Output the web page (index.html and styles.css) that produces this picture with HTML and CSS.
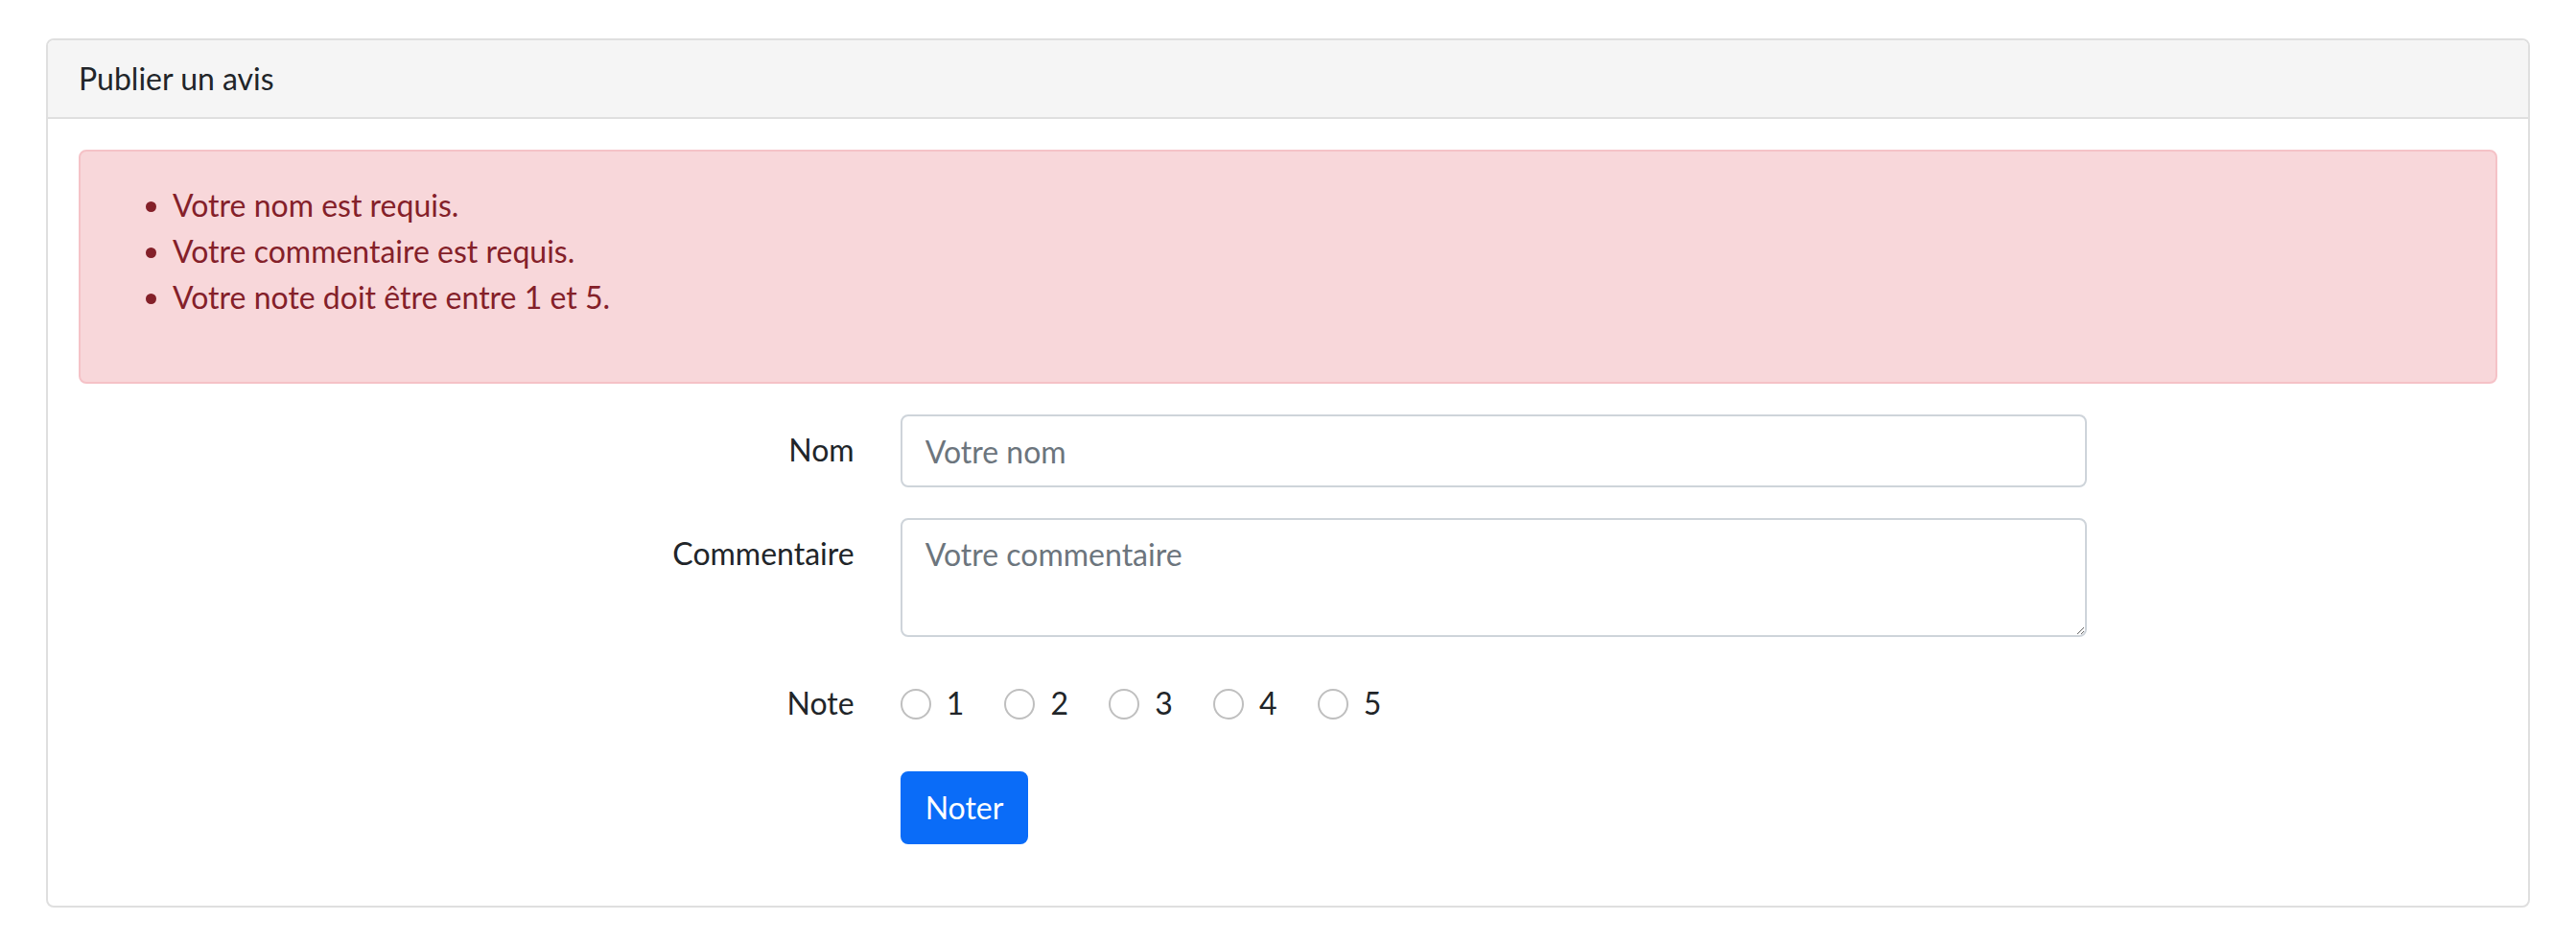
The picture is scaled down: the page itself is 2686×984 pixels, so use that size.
FILE: index.html
```html
<!DOCTYPE html>
<html lang="fr">
<head>
<meta charset="utf-8">
<title>Publier un avis</title>
<link rel="stylesheet" href="styles.css">
</head>
<body>
<div class="page">
  <div class="card">
    <div class="card-header">Publier un avis</div>
    <div class="card-body">
      <div class="alert">
        <ul>
          <li>Votre nom est requis.</li>
          <li>Votre commentaire est requis.</li>
          <li>Votre note doit être entre 1 et 5.</li>
        </ul>
      </div>
      <form class="form">
        <div class="row">
          <label class="col-label" for="nom">Nom</label>
          <div class="col-field"><input id="nom" class="control" type="text" placeholder="Votre nom"></div>
        </div>
        <div class="row">
          <label class="col-label" for="commentaire">Commentaire</label>
          <div class="col-field"><textarea id="commentaire" class="control textarea" rows="2" placeholder="Votre commentaire"></textarea></div>
        </div>
        <div class="row">
          <label class="col-label">Note</label>
          <div class="col-field radios">
            <div class="check"><input class="radio" type="radio" name="note" id="n1"><label for="n1">1</label></div>
            <div class="check"><input class="radio" type="radio" name="note" id="n2"><label for="n2">2</label></div>
            <div class="check"><input class="radio" type="radio" name="note" id="n3"><label for="n3">3</label></div>
            <div class="check"><input class="radio" type="radio" name="note" id="n4"><label for="n4">4</label></div>
            <div class="check"><input class="radio" type="radio" name="note" id="n5"><label for="n5">5</label></div>
          </div>
        </div>
        <div class="row">
          <div class="col-empty"></div>
          <div class="col-field"><button type="submit" class="btn">Noter</button></div>
        </div>
      </form>
    </div>
  </div>
</div>
</body>
</html>
```
FILE: styles.css
```css
* { box-sizing: border-box; }
html, body { margin: 0; padding: 0; background: #fff; }
body {
  font-family: Lato, "Noto Sans", "Liberation Sans", sans-serif;
  font-size: 32px;
  line-height: 48px;
  color: #212529;
}
.page { padding: 40px 48px; }
.card {
  border: 2px solid #dfdfdf;
  border-radius: 8px;
  background: #fff;
}
.card-header {
  background: #f5f5f5;
  padding: 16px 32px;
  border-bottom: 2px solid #dfdfdf;
  border-radius: 6px 6px 0 0;
}
.card-body { padding: 32px; }
.alert {
  background: #f8d7da;
  border: 2px solid #f5c2c7;
  color: #842029;
  border-radius: 8px;
  padding: 32px;
  margin-bottom: 32px;
}
.alert ul { margin: 0 0 32px 0; padding-left: 64px; }
.row {
  display: grid;
  grid-template-columns: 4fr 6fr 2fr;
  margin: 0 -24px 32px;
}
.col-label, .col-empty, .col-field { padding: 0 24px; }
.col-label {
  text-align: right;
  padding-top: 13px;
  padding-bottom: 15px;
}
.control {
  display: block;
  width: 100%;
  height: 76px;
  padding: 12px 24px;
  font: inherit;
  color: #212529;
  border: 2px solid #ced4da;
  border-radius: 8px;
  background: #fff;
  margin: 0;
}
.control::placeholder { color: #6c757d; opacity: 1; }
.textarea { height: 124px; resize: vertical; }
.radios { padding-top: 13px; }
.check {
  display: inline-block;
  padding-left: 48px;
  margin-right: 34px;
  min-height: 48px;
}
.radio {
  -webkit-appearance: none;
  appearance: none;
  float: left;
  width: 32px;
  height: 32px;
  margin: 9px 0 0 -48px;
  border: 2px solid #bfbfbf;
  border-radius: 50%;
  background: #fff;
}
.btn {
  font: inherit;
  color: #fff;
  background: #0a6cf8;
  border: 2px solid #0a6cf8;
  border-radius: 8px;
  padding: 12px 24px;
  height: 76px;
  cursor: pointer;
}
```
